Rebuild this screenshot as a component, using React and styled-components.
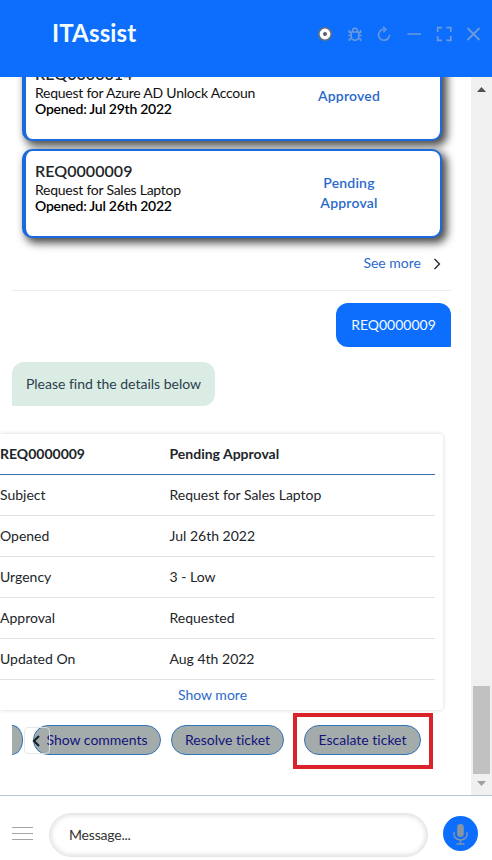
import React from "react";
import styled, { createGlobalStyle } from "styled-components";

const GlobalStyle = createGlobalStyle`
  * { box-sizing: border-box; }
  body { margin: 0; background: #fff; font-family: Lato, "Liberation Sans", sans-serif; }
  button, input { font: inherit; }
`;

const Window = styled.div`
  width: 492px;
  height: 860px;
  display: flex;
  flex-direction: column;
  overflow: hidden;
  background: #fff;
  font-size: 14px;
  color: #212529;
`;

const Header = styled.header`
  flex: none;
  height: 77px;
  padding: 0 11px 9px 52px;
  display: flex;
  align-items: center;
  justify-content: space-between;
  background: #0d6efd;
`;

const Title = styled.h1`
  margin: -2px 0 0;
  font-size: 24px;
  line-height: 30px;
  font-weight: 700;
  letter-spacing: 0.15px;
  color: #f4fbff;
`;

const HeaderIcons = styled.svg`
  width: 166px;
  height: 24px;
  display: block;
  fill: none;
  stroke: #6d9ad8;
  stroke-width: 1.5;
`;

const Body = styled.main`
  flex: none;
  height: 718px;
  display: flex;
  overflow: hidden;
`;

const Conversation = styled.div`
  width: 471px;
  display: flex;
  flex-direction: column;
  overflow: hidden;
`;

const Cards = styled.div`
  flex: none;
  display: flex;
  flex-direction: column;
  gap: 8px;
  margin: -25px 0 0 22px;
  width: 420px;
`;

const Card = styled.article`
  height: 89px;
  display: flex;
  border: 2px solid #1c69df;
  border-left-width: 4px;
  border-radius: 10px;
  background: #fff;
  box-shadow: 4px 4px 9px 1px #4b4b4b;
`;

const CardInfo = styled.div`
  width: 252px;
  padding: 10px 0 0 9px;
  line-height: 16px;
  letter-spacing: -0.25px;
  white-space: nowrap;
  color: #111;
`;

const CardTitle = styled.div`
  margin-bottom: 2px;
  font-size: 16px;
  line-height: 19px;
  letter-spacing: 0.05px;
  font-weight: 600;
  color: #212529;
`;

const Opened = styled.div`
  font-weight: 600;
  color: #000;
`;

const Status = styled.div`
  width: 142px;
  display: flex;
  align-items: center;
  justify-content: center;
  padding: 0 35px 2px;
  text-align: center;
  line-height: 20px;
  font-weight: 600;
  letter-spacing: 0.2px;
  color: #2a69cb;
`;

const SeeMore = styled.div`
  flex: none;
  height: 53px;
  margin: 0 20px 12px 12px;
  padding: 0 10px 4px 0;
  display: flex;
  align-items: center;
  justify-content: flex-end;
  gap: 12px;
  border-bottom: 1px solid #e9eff1;
  color: #2a69cb;
`;

const Chevron = styled.svg`
  width: 8px;
  height: 12px;
  margin-top: 4px;
  fill: none;
  stroke: #222;
  stroke-width: 1.3;
`;

const Bubble = styled.div`
  flex: none;
  width: ${(p) => (p.$own ? 115 : 203)}px;
  height: 44px;
  padding-bottom: 2px;
  align-self: ${(p) => (p.$own ? "flex-end" : "flex-start")};
  margin: ${(p) => (p.$own ? "0 20px 15px 0" : "0 0 28px 12px")};
  border-radius: ${(p) => (p.$own ? "12px 12px 1px 12px" : "12px 12px 12px 1px")};
  display: flex;
  align-items: center;
  justify-content: center;
  white-space: nowrap;
  letter-spacing: ${(p) => (p.$own ? "0" : "-0.001px")};
  font-variant-ligatures: common-ligatures;
  background: ${(p) => (p.$own ? "#0d6efd" : "#dbece4")};
  color: ${(p) => (p.$own ? "#f4fbff" : "#2b3f4d")};
`;

const Details = styled.section`
  flex: none;
  width: 443px;
  height: 276px;
  padding-right: 8px;
  border-radius: 0 4px 4px 0;
  box-shadow: 0 0 4px rgba(0, 0, 0, 0.16);
`;

const Row = styled.div`
  height: 41px;
  padding-bottom: 2px;
  display: grid;
  grid-template-columns: 169.5px 1fr;
  align-items: center;
  white-space: nowrap;
  border-bottom: 1px solid ${(p) => (p.$head ? "#3b6da6" : "#dee2e6")};
  font-weight: ${(p) => (p.$head ? 700 : 400)};
`;

const ShowMore = styled.div`
  height: 28px;
  display: flex;
  align-items: center;
  justify-content: center;
  margin-right: 10px;
  color: #2a69cb;
`;

const Actions = styled.div`
  flex: none;
  position: relative;
  margin: 3px 0 0 12px;
  height: 56px;
  display: flex;
  align-items: center;
  gap: 10px;
  overflow: hidden;
`;

const Pill = styled.button`
  flex: none;
  width: ${(p) => p.$w}px;
  height: 30px;
  margin: -2px 0 0;
  padding: 0 0 2px;
  border: 1px solid #3475b5;
  border-radius: 15px;
  background: #a3acab;
  color: #13137c;
  white-space: nowrap;
  font-variant-ligatures: none;
`;

const CutPill = styled(Pill)`
  border-left: 0;
  border-radius: 0 11px 11px 0 / 0 15px 15px 0;
`;

const Highlight = styled.div`
  width: 140px;
  height: 56px;
  margin-left: -1px;
  padding-left: 7px;
  display: flex;
  align-items: center;
  border: 4px solid #d9222a;
`;

const Previous = styled.button`
  position: absolute;
  left: 12px;
  top: 14px;
  width: 26px;
  height: 27px;
  padding: 0;
  border: 1px solid rgba(225, 229, 229, 0.85);
  border-radius: 4px;
  background: transparent;
  display: flex;
  align-items: center;
  justify-content: center;
`;

const Arrow = styled.svg`
  width: 8px;
  height: 12px;
  margin-left: -2px;
  fill: none;
  stroke: #1b2024;
  stroke-width: 2.2;
`;

const Scrollbar = styled.div`
  width: 21px;
  display: flex;
  flex-direction: column;
  align-items: center;
  padding: 9px 0 9px;
  background: #f0f0f0;
`;

const Thumb = styled.div`
  width: 17px;
  height: 88px;
  margin: auto 0 7px;
  background: #c1c1c1;
`;

const Triangle = styled.svg`
  width: 9px;
  height: 5px;
  display: block;
  fill: ${(p) => (p.$up ? "#505050" : "#a0a0a0")};
  margin-top: ${(p) => (p.$up ? 1 : 0)}px;
`;

const Footer = styled.footer`
  flex: none;
  height: 65px;
  padding: 0 14px 0 12px;
  display: flex;
  align-items: center;
  border-top: 1px solid #b5c9da;
`;

const Menu = styled.svg`
  width: 21px;
  height: 14px;
  margin: 12px 16px 0 0;
  stroke: #a5a5a5;
  stroke-width: 1;
`;

const Message = styled.input`
  width: 379px;
  height: 44px;
  margin: 14px 15px 0 0;
  padding: 0 19px 2px;
  border: 1px solid #e7e7e7;
  border-radius: 22px;
  outline: 0;
  background: #fff;
  box-shadow: inset 0 0 5px 1px rgba(0, 0, 0, 0.14);
  letter-spacing: -0.2px;
  &::placeholder { color: #333; opacity: 1; }
`;

const MicButton = styled.button`
  flex: none;
  width: 35px;
  height: 35px;
  margin-top: 11px;
  padding: 0;
  border: 0;
  border-radius: 50%;
  background: #0d6efd;
  svg { display: block; margin: 1px auto 0; }
`;

const cards = [
  { id: "REQ0000014", text: "Request for Azure AD Unlock Accoun", opened: "Jul 29th 2022", status: "Approved" },
  { id: "REQ0000009", text: "Request for Sales Laptop", opened: "Jul 26th 2022", status: "Pending Approval" },
];

const details = [
  ["REQ0000009", "Pending Approval"],
  ["Subject", "Request for Sales Laptop"],
  ["Opened", "Jul 26th 2022"],
  ["Urgency", "3 - Low"],
  ["Approval", "Requested"],
  ["Updated On", "Aug 4th 2022"],
];

export default function App() {
  return (
    <Window>
      <GlobalStyle />
      <Header>
        <Title>ITAssist</Title>
        <HeaderIcons viewBox="0 0 166 24">
          <circle cx="10" cy="12" r="6.2" fill="#fff" stroke="#62707c" strokeWidth="1.6" />
          <circle cx="10" cy="12" r="2" fill="#56606a" stroke="none" />
          <path d="M36.300 10h7.400v4.500a3.700 3.700 0 0 1-7.400 0zM37.600 10V8.600a2.400 2.400 0 0 1 4.800 0V10M36.300 11l-2-.8V8M43.700 11l2-.8V8M36.300 13.500h-3M43.700 13.500h3M37 16.500l-2.500.5v2M43 16.500l2.500.5v2" strokeWidth="1.500" />
          <path d="M69 7.300A5.500 5.500 0 1 0 74.500 12.700M68 4.800l3 2.500-2.700 3" />
          <path d="M92.500 12h13.500" />
          <path d="M122.700 10V5.700h4.300M131.500 5.700h4.300V10M135.800 14v4.300h-4.300M127 18.300h-4.300V14" strokeWidth="1.700" />
          <path d="M152.500 6l12 12M164.500 6l-12 12" strokeWidth="1.800" />
        </HeaderIcons>
      </Header>
      <Body>
        <Conversation>
          <Cards>
            {cards.map((c) => (
              <Card key={c.id}>
                <CardInfo>
                  <CardTitle>{c.id}</CardTitle>
                  <div>{c.text}</div>
                  <Opened>Opened: {c.opened}</Opened>
                </CardInfo>
                <Status>{c.status}</Status>
              </Card>
            ))}
          </Cards>
          <SeeMore>
            See more
            <Chevron viewBox="0 0 8 12"><path d="M1.500 1l5 5-5 5" /></Chevron>
          </SeeMore>
          <Bubble $own>REQ0000009</Bubble>
          <Bubble>Please find the details below</Bubble>
          <Details>
            {details.map(([label, value], i) => (
              <Row key={label} $head={i === 0}>
                <span>{label}</span>
                <span>{value}</span>
              </Row>
            ))}
            <ShowMore>Show more</ShowMore>
          </Details>
          <Actions>
            <CutPill $w={11} aria-label="Previous action" />
            <Pill $w={128}>Show comments</Pill>
            <Pill $w={113}>Resolve ticket</Pill>
            <Highlight><Pill $w={117}>Escalate ticket</Pill></Highlight>
            <Previous aria-label="Scroll actions back">
              <Arrow viewBox="0 0 8 12"><path d="M7 1L2 6l5 5" /></Arrow>
            </Previous>
          </Actions>
        </Conversation>
        <Scrollbar>
          <Triangle $up viewBox="0 0 9 5"><path d="M0 5L4.500 0 9 5z" /></Triangle>
          <Thumb />
          <Triangle viewBox="0 0 9 5"><path d="M0 0l4.500 5L9 0z" /></Triangle>
        </Scrollbar>
      </Body>
      <Footer>
        <Menu viewBox="0 0 21 14"><path d="M0 .5h21M0 6.500h21M0 12.500h21" /></Menu>
        <Message placeholder="Message..." aria-label="Message" />
        <MicButton aria-label="Voice input">
          <svg width="15" height="22" viewBox="0 0 15 22" fill="none" stroke="#8196ad" strokeWidth="1.400">
            <rect x="4.200" y="1" width="6.600" height="13" rx="3.300" fill="#8795a3" stroke="none" />
            <path d="M1 9v2.500a6.500 5.500 0 0 0 13 0V9M7.500 17v4M3.500 21h8" />
          </svg>
        </MicButton>
      </Footer>
    </Window>
  );
}
